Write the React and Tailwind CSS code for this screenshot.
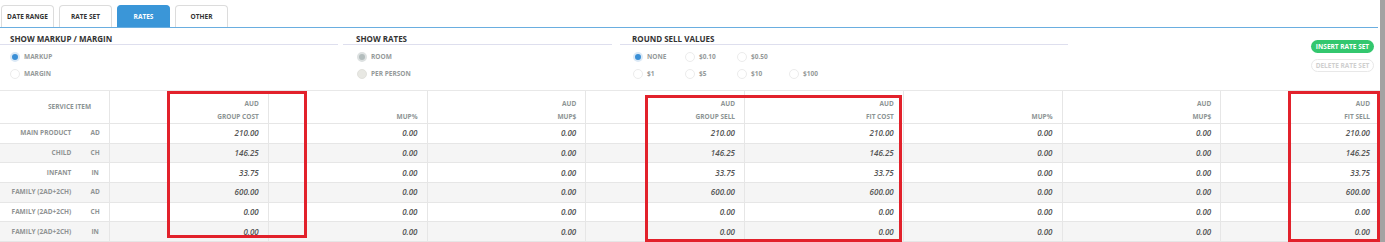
import React from 'react'

const font = { fontFamily: '"Open Sans", "Liberation Sans", sans-serif' }

const tabs = ['DATE RANGE', 'RATE SET', 'RATES', 'OTHER']

const rows = [
  ['MAIN PRODUCT', 'AD', '210.00'],
  ['CHILD', 'CH', '146.25'],
  ['INFANT', 'IN', '33.75'],
  ['FAMILY (2AD+2CH)', 'AD', '600.00'],
  ['FAMILY (2AD+2CH)', 'CH', '0.00'],
  ['FAMILY (2AD+2CH)', 'IN', '0.00'],
]

const headers = [
  ['AUD', 'GROUP COST'],
  ['', 'MUP%'],
  ['AUD', 'MUP$'],
  ['AUD', 'GROUP SELL'],
  ['AUD', 'FIT COST'],
  ['', 'MUP%'],
  ['AUD', 'MUP$'],
  ['AUD', 'FIT SELL'],
]

function Radio({ kind, label }) {
  let dot = 'border border-[#ececec] bg-white'
  if (kind === 'on') dot = 'bg-[#3a8fd6] border-2 border-[#dbe9f6]'
  if (kind === 'grey') dot = 'bg-[#b3bdbd] border-2 border-[#dde1e1]'
  if (kind === 'light') dot = 'bg-[#e8e8e3] border border-[#e2e2dd]'
  return (
    <div className="flex items-center h-[10px]">
      <span className={`w-[10px] h-[10px] rounded-full ${dot}`} />
      <span className="ml-[4px] text-[6.5px] font-bold text-[#959a9a] leading-[10px]">{label}</span>
    </div>
  )
}

function Heading({ children, pad }) {
  return (
    <div className={`h-[17px] pt-[5px] border-b border-[#dedfee] text-[8px] font-bold text-[#333] leading-[11px] ${pad}`}>
      {children}
    </div>
  )
}

export default function App() {
  return (
    <div className="flex w-[1385px] h-[242px] overflow-hidden bg-white" style={font}>
      <div className="w-[1380px] flex flex-col">
        {/* Tabs */}
        <div className="flex gap-[5px] pl-[1px] pt-[5px]">
          {tabs.map(t => (
            <div
              key={t}
              className={`w-[53px] h-[22px] rounded-t-[4px] border border-b-0 flex items-center justify-center text-[6.5px] font-bold ${
                t === 'RATES' ? 'bg-[#3a96d8] border-[#3a96d8] text-white' : 'border-[#dcdcdc] text-[#333]'
              }`}
            >
              {t}
            </div>
          ))}
        </div>
        <div className="h-[1px] w-[1378px] bg-[#6aaee0]" />

        {/* Settings */}
        <div className="flex h-[63px]">
          <div className="w-[338px]">
            <Heading pad="pl-[10px]">SHOW MARKUP / MARGIN</Heading>
            <div className="pl-[10px] pt-[7px] flex flex-col gap-[7px]">
              <Radio kind="on" label="MARKUP" />
              <Radio label="MARGIN" />
            </div>
          </div>
          <div className="w-[269px] ml-[5px]">
            <Heading pad="pl-[13px]">SHOW RATES</Heading>
            <div className="pl-[14px] pt-[7px] flex flex-col gap-[7px]">
              <Radio kind="grey" label="ROOM" />
              <Radio kind="light" label="PER PERSON" />
            </div>
          </div>
          <div className="w-[448px] ml-[8px]">
            <Heading pad="pl-[12px]">ROUND SELL VALUES</Heading>
            <div className="pl-[13px] pt-[7px] flex flex-col gap-[7px]">
              <div className="flex">
                <div className="w-[52px]"><Radio kind="on" label="NONE" /></div>
                <div className="w-[52px]"><Radio label="$0.10" /></div>
                <div className="w-[52px]"><Radio label="$0.50" /></div>
              </div>
              <div className="flex">
                <div className="w-[52px]"><Radio label="$1" /></div>
                <div className="w-[52px]"><Radio label="$5" /></div>
                <div className="w-[52px]"><Radio label="$10" /></div>
                <div className="w-[52px]"><Radio label="$100" /></div>
              </div>
            </div>
          </div>
          <div className="ml-auto mr-[6px] pt-[12px] flex flex-col gap-[6px]">
            <button className="w-[63px] h-[13px] rounded-full bg-[#33c76e] text-white text-[6.5px] font-bold leading-[13px] whitespace-nowrap">
              INSERT RATE SET
            </button>
            <button className="w-[63px] h-[13px] rounded-full border border-[#e8e8e8] text-[#cfcfcf] text-[6.5px] font-bold leading-[11px] whitespace-nowrap">
              DELETE RATE SET
            </button>
          </div>
        </div>

        {/* Table */}
        <div className="relative border-t border-[#e8e8e8]">
          <div className="grid grid-cols-[110px_repeat(8,minmax(0,1fr))]">
            <div className="h-[33px] border-r border-b border-[#e6e6e6] flex items-center pl-[48px] text-[6.5px] font-bold text-[#8c9494]">
              SERVICE ITEM
            </div>
            {headers.map((h, i) => (
              <div
                key={i}
                className="h-[33px] border-r border-b border-[#e6e6e6] flex flex-col items-end pt-[6px] pr-[9px] text-[6.5px] font-bold text-[#8c9494] leading-[13px]"
              >
                <span className="h-[13px]">{h[0]}</span>
                <span>{h[1]}</span>
              </div>
            ))}
            {rows.map((r, ri) => {
              const bg = ri % 2 === 1 ? 'bg-[#f5f5f5]' : 'bg-white'
              const vals = [r[2], '0.00', '0.00', r[2], r[2], '0.00', '0.00', r[2]]
              return (
                <React.Fragment key={ri}>
                  <div className={`h-[19.7px] border-r border-b border-[#e6e6e6] flex items-center text-[6.5px] font-bold text-[#8f9393] ${bg}`}>
                    <span className="w-[72px] text-right whitespace-nowrap">{r[0]}</span>
                    <span className="w-[28px] ml-[10px] text-center">{r[1]}</span>
                  </div>
                  {vals.map((v, vi) => (
                    <div
                      key={vi}
                      className={`h-[19.7px] border-r border-b border-[#e6e6e6] flex items-center justify-end pr-[9px] text-[8px] font-semibold italic text-[#555] ${bg}`}
                    >
                      {v}
                    </div>
                  ))}
                </React.Fragment>
              )
            })}
          </div>
          {/* annotation boxes */}
          <div className="absolute left-[167px] top-0 w-[140px] h-[147px] border-[3px] border-[#e2212b]" />
          <div className="absolute left-[645px] top-[4px] w-[257px] h-[147px] border-[3px] border-[#e2212b]" />
          <div className="absolute left-[1288px] top-0 w-[92px] h-[151px] border-[3px] border-[#e2212b]" />
        </div>
      </div>
      <div className="w-[5px] h-full bg-[#a3a3a3]" />
    </div>
  )
}
